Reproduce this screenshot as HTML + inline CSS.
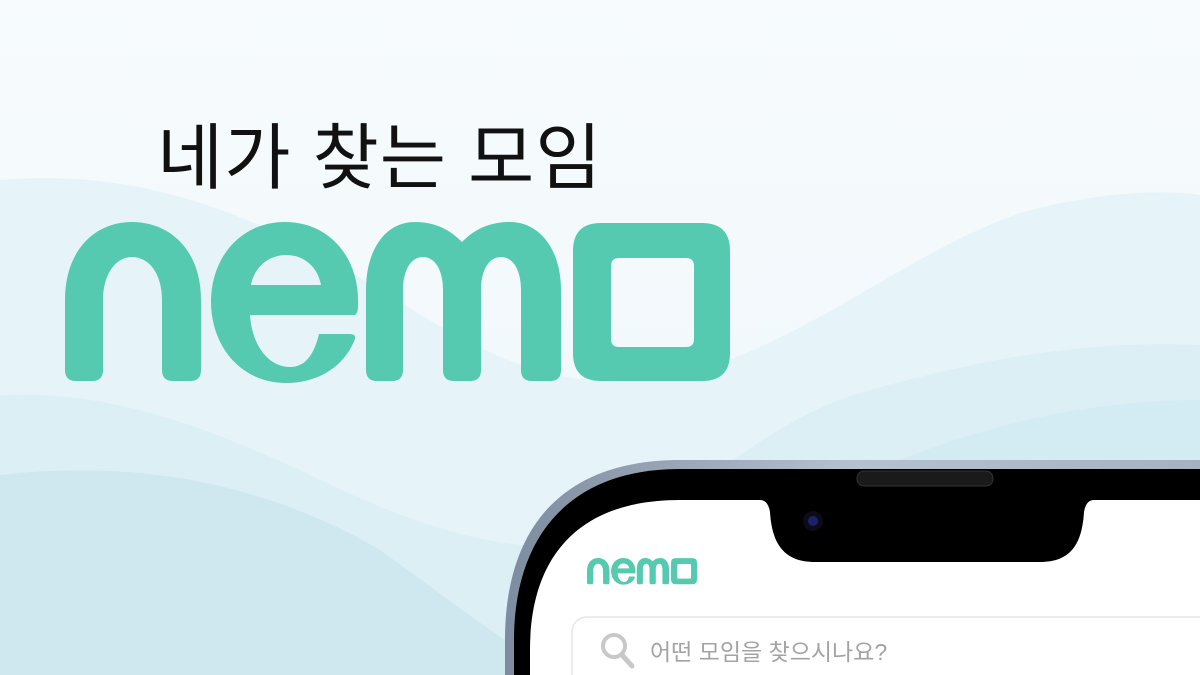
<!DOCTYPE html>
<html><head><meta charset="utf-8"><style>
html,body{margin:0;padding:0;width:1200px;height:675px;overflow:hidden;background:#f5fafc}
.h{position:absolute;left:157px;top:99px;font:400 72px "Liberation Sans","Noto Sans CJK KR",sans-serif;color:#111;letter-spacing:1px;white-space:nowrap}
.st{position:absolute;left:650px;top:633px;font:400 23px "Liberation Sans","Noto Sans CJK KR",sans-serif;color:#a3a3a3;white-space:nowrap}
</style></head><body>
<svg width="1200" height="675" style="position:absolute;left:0;top:0">
<defs>
<linearGradient id="bg" x1="0" y1="0" x2="0" y2="1"><stop offset="0" stop-color="#f7fbfd"/><stop offset="1" stop-color="#eef7fa"/></linearGradient>
<linearGradient id="fr" x1="0" y1="0" x2="1" y2="0"><stop offset="0" stop-color="#7d8c9f"/><stop offset=".5" stop-color="#b6c1cf"/><stop offset="1" stop-color="#a7b2c0"/></linearGradient>
<g id="logo" fill="#55cab0" fill-rule="evenodd">
<path d="M65,370 V300 C65,250 95,222 132,222 C170,222 201,250 201,300 V370 q0,11 -11,11 h-17 q-11,0 -11,-11 V300 C162,275 150,257 132,257 C115,257 103,275 103,300 V370 q0,11 -11,11 h-16 q-11,0 -11,-11Z"/>
<path d="M354,315 H250 C252,345 268,367 290,367 C305,367 314,355 319,334 H350 q6,0 5,5 C345,365 320,383 286,383 C240,383 211,345 211,302 C211,258 240,222 285,222 C330,222 358,258 358,300 V305 q0,10 -4,10 Z M251,285 H321 C318,268 305,255 286,255 C268,255 254,268 251,285Z"/>
<path d="M366,370 V290 C366,250 385,222 415,222 C438,222 452,232 462,242 C472,232 486,222 510,222 C540,222 561,250 561,290 V370 q0,11 -11,11 h-18 q-11,0 -11,-11 V290 C521,270 513,257 501,257 C489,257 481,270 481,290 V370 q0,11 -11,11 h-16 q-11,0 -11,-11 V290 C443,270 435,257 423,257 C411,257 403,270 403,290 V370 q0,11 -11,11 h-15 q-11,0 -11,-11Z"/>
<path d="M601,223 H702 Q730,223 730,251 V353 Q730,381 702,381 H601 Q573,381 573,353 V251 Q573,223 601,223Z M619,258 Q611,258 611,266 V339 Q611,347 619,347 H686 Q694,347 694,339 V266 Q694,258 686,258Z"/>
</g>
</defs>
<rect width="1200" height="675" fill="url(#bg)"/>
<path d="M0,180 C120,170 220,200 330,260 C450,330 520,390 640,380 C780,370 900,250 1030,210 C1110,190 1170,190 1200,195 V675 H0Z" fill="#e6f4f9"/>
<path d="M0,395 C100,390 190,420 300,470 C420,530 520,560 600,540 C700,500 760,420 870,390 C980,360 1080,340 1200,345 V675 H0Z" fill="#dbeff5"/>
<path d="M0,475 C130,460 260,480 380,550 C450,600 500,640 560,675 H0Z" fill="#cfe7ef"/>
<path d="M900,460 C1000,420 1100,400 1200,400 V675 H900Z" fill="#d3ecf3"/>
<use href="#logo"/>
<path d="M505,675 V640 C505,530 560,460 680,460 H1200 V675Z" fill="url(#fr)"/>
<path d="M514,675 V640 C514,538 568,469 680,469 H1200 V675Z" fill="#000"/>
<path d="M530,675 V650 C530,560 575,500 680,500 H760 Q768,500 770,512 C772,545 785,562 815,562 H1040 C1070,562 1082,545 1084,512 Q1086,500 1094,500 H1200 V675Z" fill="#fff"/>
<rect x="857" y="471" width="136" height="15" rx="7" fill="#1a1a1a" stroke="#333"/>
<circle cx="813" cy="521" r="10" fill="#0c0c18"/><circle cx="813" cy="521" r="5" fill="#1c2266"/>
<g transform="translate(587,558) scale(0.1654) translate(-65,-222)"><use href="#logo"/></g>
<rect x="572" y="617" width="700" height="80" rx="15" fill="#fff" stroke="#e6e6e6" stroke-width="1.5"/>
<circle cx="614" cy="646" r="11" fill="none" stroke="#c8c8c8" stroke-width="4"/>
<path d="M622,655 L632,666" stroke="#c8c8c8" stroke-width="5" stroke-linecap="round"/>
</svg>
<div class="h">네가 찾는 모임</div>
<div class="st">어떤 모임을 찾으시나요?</div>
</body></html>
